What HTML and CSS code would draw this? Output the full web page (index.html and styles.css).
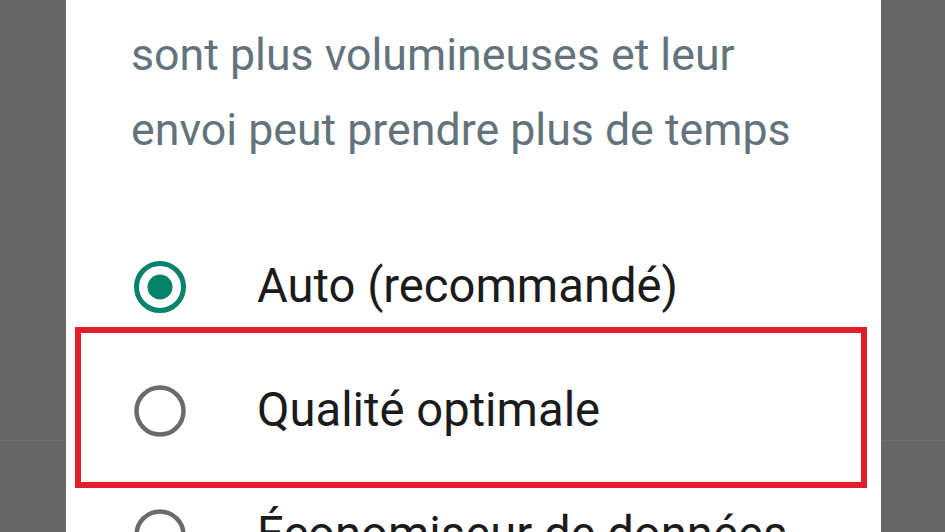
FILE: index.html
```html
<!DOCTYPE html>
<html lang="fr">
<head>
<meta charset="utf-8">
<title>Qualité d'envoi</title>
<link rel="stylesheet" href="styles.css">
</head>
<body>
<div class="scrim">
  <div class="dialog">
    <p class="message">sont plus volumineuses et leur<br>envoi peut prendre plus de temps</p>
    <div class="options">
      <div class="option">
        <svg class="radio" viewBox="0 0 52 52" width="52" height="52"><circle cx="26" cy="26" r="23.5" fill="none" stroke="#06826b" stroke-width="5"/><circle cx="26" cy="26" r="12.5" fill="#06826b"/></svg>
        <span class="label">Auto (recommandé)</span>
      </div>
      <div class="option highlighted">
        <svg class="radio" viewBox="0 0 52 52" width="52" height="52"><circle cx="26" cy="26" r="23.5" fill="none" stroke="#6a6a6a" stroke-width="4.5"/></svg>
        <span class="label">Qualité optimale</span>
        <div class="annotation"></div>
      </div>
      <div class="option">
        <svg class="radio" viewBox="0 0 52 52" width="52" height="52"><circle cx="26" cy="26" r="23.5" fill="none" stroke="#6a6a6a" stroke-width="4.5"/></svg>
        <span class="label">Économiseur de données</span>
      </div>
    </div>
  </div>
</div>
</body>
</html>
```
FILE: styles.css
```css
html, body {
  margin: 0;
  padding: 0;
}
body {
  width: 945px;
  height: 532px;
  overflow: hidden;
  background: #666666;
  font-family: Roboto, "Noto Sans", sans-serif;
}
.scrim {
  height: 532px;
  background: linear-gradient(to bottom, transparent 440px, #6f6f6f 440px, #6f6f6f 441px, transparent 441px);
  padding-left: 66px;
  box-sizing: border-box;
}
.dialog {
  width: 815px;
  height: 700px;
  background: #ffffff;
  padding-top: 18px;
  box-sizing: border-box;
}
.message {
  margin: 0;
  padding-left: 65px;
  font-size: 44.7px;
  line-height: 75px;
  color: #63737c;
}
.options {
  margin-top: 57px;
}
.option {
  position: relative;
  display: flex;
  align-items: center;
  height: 124px;
  padding-left: 68px;
}
.radio {
  flex: none;
  display: block;
}
.label {
  margin-left: 71px;
  font-size: 47.2px;
  line-height: 1;
  color: #1b1b1b;
}
.annotation {
  position: absolute;
  left: 9px;
  right: 14px;
  top: -22px;
  bottom: -15px;
  border: 6px solid #e31e2b;
  pointer-events: none;
}
```
